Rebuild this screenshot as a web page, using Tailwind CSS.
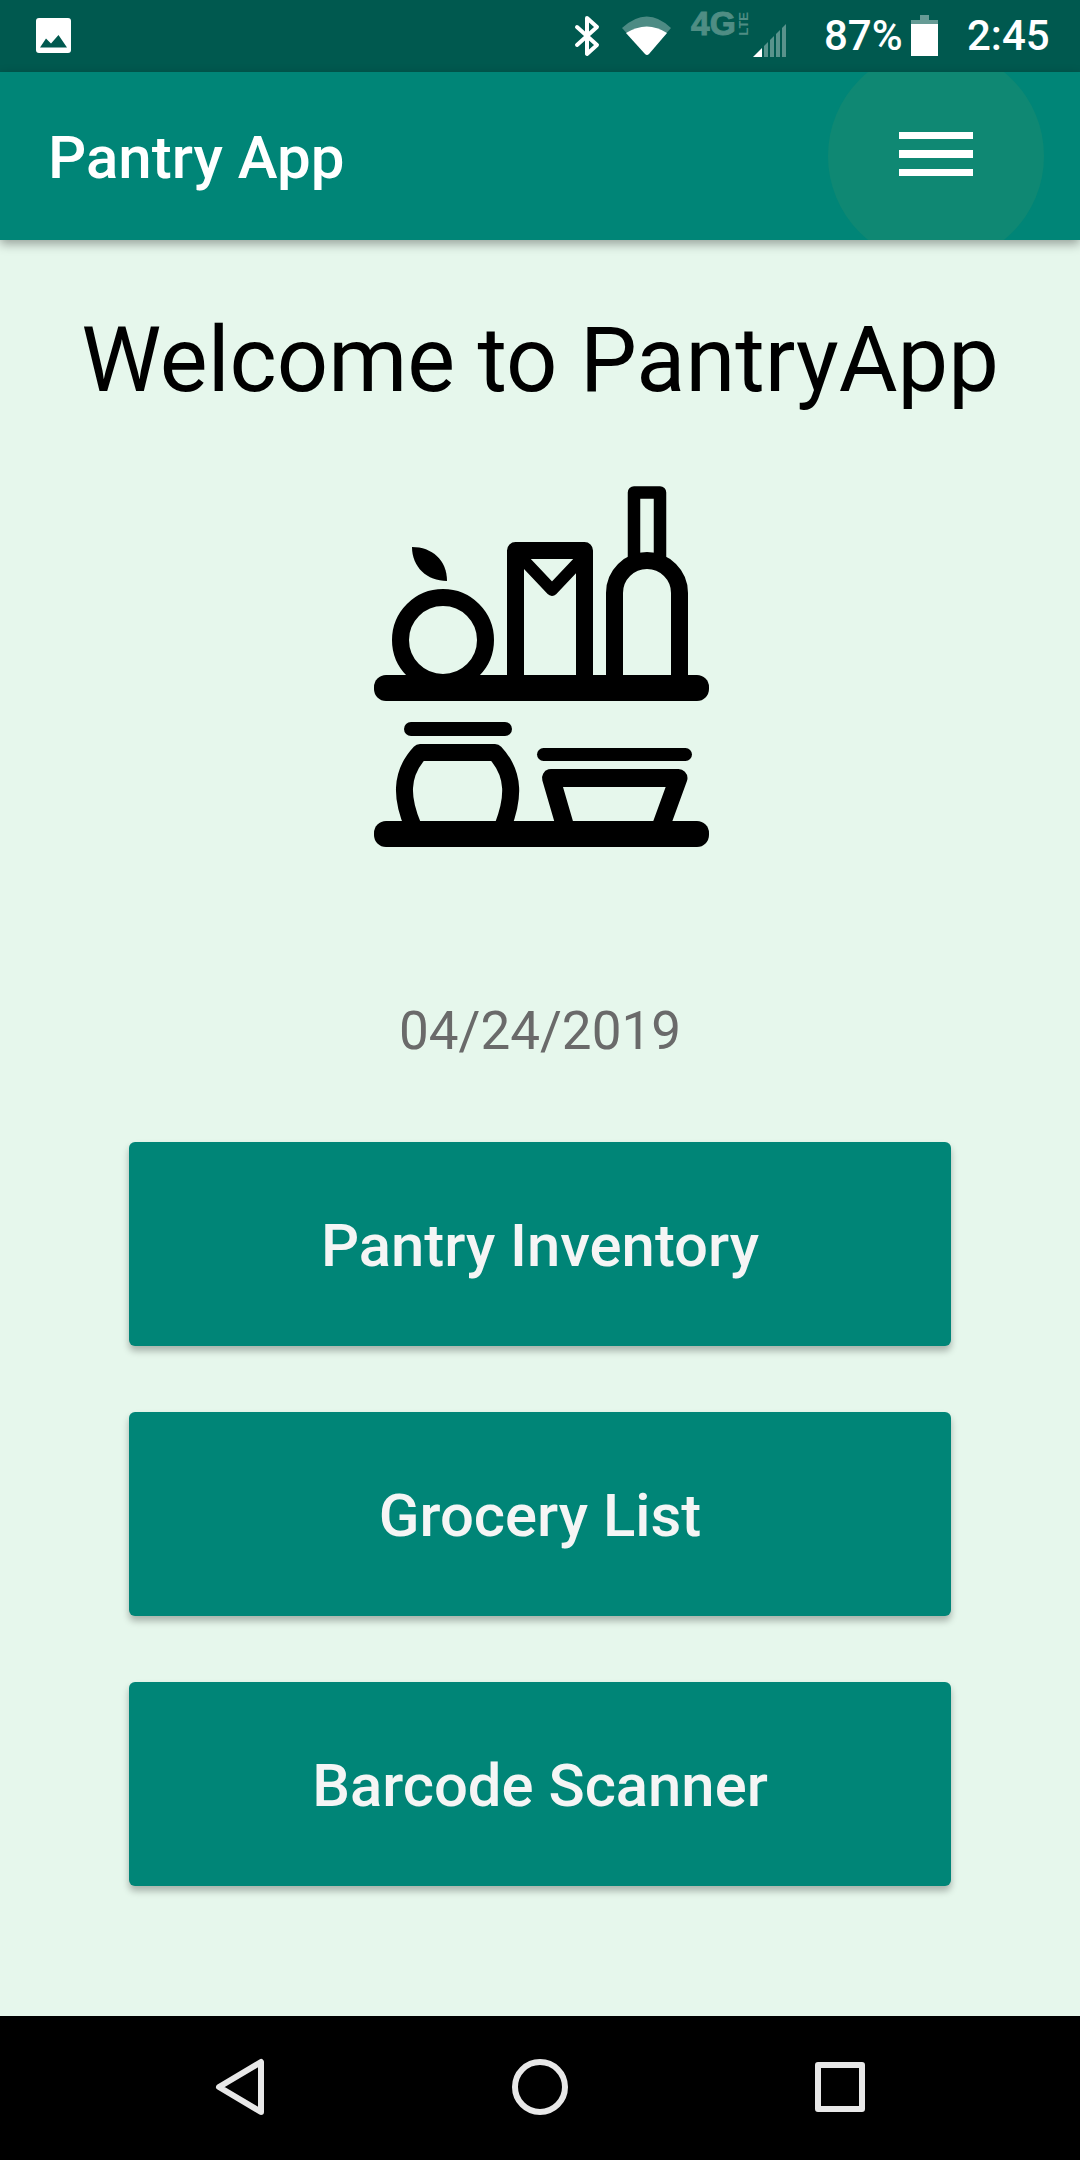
<!DOCTYPE html>
<html lang="en">
<head>
  <meta charset="UTF-8" />
  <title>Pantry App</title>
  <script src="https://cdn.jsdelivr.net/npm/@tailwindcss/browser@4"></script>
</head>
<body class="w-[1080px] h-[2160px] flex flex-col overflow-hidden bg-[#e6f7ec] font-['Roboto',sans-serif]">

  <!-- Status bar -->
  <div class="h-[72px] shrink-0 bg-[#00594f] relative flex items-center text-white">
    <svg class="ml-9 w-[35px] h-[35px] mb-[1px]" viewBox="36 18 35 35">
      <rect x="36" y="18" width="35" height="35" rx="3" fill="#fff"/>
      <path d="M40 47.5 L46 38.5 L51 43.5 L58.5 35 L67 47.5 Z" fill="#00594f"/>
    </svg>
    <div class="ml-auto flex items-center">
      <svg class="w-[30px] h-[44px]" viewBox="572 15 30 44" fill="none" stroke="#fff" stroke-width="4" stroke-linejoin="round" stroke-linecap="round">
        <path d="M577 28 L597 46 L587 55 V19 L597 28 L577 46"/>
      </svg>
      <svg class="ml-[20px] w-[50px] h-[42px]" viewBox="622 15 50 42">
        <path d="M622 28 Q647 5 671 28 L647 55 Z" fill="#fff" fill-opacity="0.3"/>
        <path d="M626 33 Q647 20 667 33 L649 54 Q647 56 645 54 Z" fill="#fff"/>
      </svg>
      <div class="ml-[19px] w-[62px] h-[44px] flex items-start text-[#4f8d84] self-start pt-[9px]">
        <span class="text-[33.5px] leading-[30px] font-bold [-webkit-text-stroke:1px_#4f8d84] font-['Liberation_Sans',sans-serif]">4G</span>
        <span class="text-[13px] leading-[12px] font-bold [writing-mode:vertical-rl] rotate-180 mt-[3px] ml-[2px] font-['Liberation_Sans',sans-serif]">LTE</span>
      </div>
      <svg class="w-[34px] h-[34px] mt-[9px]" viewBox="753 24 34 34" fill="#fff">
        <path d="M753 57 L762 48 V57 Z"/>
        <g fill-opacity="0.35">
          <path d="M764 46 L768 42 V57 H764 Z"/>
          <path d="M770 40 L774 36 V57 H770 Z"/>
          <path d="M776 34 L780 30 V57 H776 Z"/>
          <path d="M782 28 L786 24 V57 H782 Z"/>
        </g>
      </svg>
      <span class="ml-[37px] w-[80px] whitespace-nowrap text-[42px] leading-[72px] font-medium">87%</span>
      <svg class="ml-[7px] w-[27px] h-[42px] mt-[-1px]" viewBox="911 15 27 42" fill="#fff">
        <path d="M920 15 H929 V20 H938 V24 H911 V20 H920 Z" fill-opacity="0.4"/>
        <rect x="911" y="24" width="27" height="32"/>
      </svg>
      <span class="ml-[29px] mr-[31px] w-[82px] whitespace-nowrap text-[42px] leading-[72px] font-medium">2:45</span>
    </div>
  </div>

  <!-- App bar -->
  <header class="h-[168px] shrink-0 bg-[#008577] relative z-10 overflow-hidden flex items-center shadow-[0_4px_10px_rgba(0,0,0,0.35)]">
    <h1 class="ml-[48px] mt-[4px] text-[60px] leading-none font-medium text-white">Pantry App</h1>
    <div class="absolute left-[828px] top-[-24px] w-[216px] h-[216px] rounded-full bg-[#0f8873] flex flex-col items-center justify-center gap-[11px] pb-[4px]">
      <span class="w-[74px] h-[7.5px] bg-white"></span>
      <span class="w-[74px] h-[7.5px] bg-white"></span>
      <span class="w-[74px] h-[7.5px] bg-white"></span>
    </div>
  </header>

  <!-- Content -->
  <main class="flex-1 flex flex-col items-center">
    <h2 class="mt-[58px] text-[90.2px] leading-[124px] whitespace-nowrap text-black">Welcome to PantryApp</h2>

    <svg class="mt-[64px] ml-[3px] w-[335px] h-[361px]" viewBox="374 486 335 361" fill="none" stroke="#000" stroke-linejoin="round" stroke-linecap="butt">
      <!-- apple -->
      <path d="M412 547 C432 547 447 560 447 581 C427 581 412 567 412 547 Z" fill="#000" stroke="none"/>
      <circle cx="443" cy="640" r="42.5" stroke-width="17"/>
      <!-- carton -->
      <path d="M515.5 680 V550.5 H584.5 V680" stroke-width="17"/>
      <path d="M517 553 L552 590 L587 553" stroke-width="12"/>
      <!-- bottle -->
      <path d="M634 562 V492.5 H660 V562" stroke-width="12.5"/>
      <path d="M614.5 680 V593 A32.5 32.5 0 0 1 679.5 593 V680" stroke-width="17"/>
      <!-- jar -->
      <path d="M411 729 H505" stroke-width="14" stroke-linecap="round"/>
      <path d="M413 826 C402 800 399 775 420 752.5 H495 C516 775 513 800 503 826" stroke-width="17"/>
      <!-- bowl -->
      <path d="M543.5 754.5 H685.5" stroke-width="13" stroke-linecap="round"/>
      <path d="M565 826 L551 778 H678.5 L661 826" stroke-width="18"/>
      <!-- shelves -->
      <rect x="374" y="675" width="335" height="26" rx="12" fill="#000" stroke="none"/>
      <rect x="374" y="821" width="335" height="26" rx="12" fill="#000" stroke="none"/>
    </svg>

    <p class="mt-[152px] text-[53px] leading-[64px] text-[#6a6a6a]">04/24/2019</p>

    <div class="mt-[79px] flex flex-col gap-[66px]">
      <button class="w-[822px] h-[204px] pt-[6px] rounded-[6px] bg-[#008577] text-[#f5f5f5] text-[59.8px] font-medium shadow-[0_5px_7px_rgba(0,0,0,0.28)]">Pantry Inventory</button>
      <button class="w-[822px] h-[204px] pt-[6px] rounded-[6px] bg-[#008577] text-[#f5f5f5] text-[59.8px] font-medium shadow-[0_5px_7px_rgba(0,0,0,0.28)]">Grocery List</button>
      <button class="w-[822px] h-[204px] pt-[6px] rounded-[6px] bg-[#008577] text-[#f5f5f5] text-[59.8px] font-medium shadow-[0_5px_7px_rgba(0,0,0,0.28)]">Barcode Scanner</button>
    </div>
  </main>

  <!-- Navigation bar -->
  <nav class="h-[144px] shrink-0 bg-black grid grid-cols-3 px-[90px] pb-[2px] items-center justify-items-center">
    <svg class="w-[56px] h-[64px]" viewBox="212 2056 56 64" fill="none" stroke="#e8e8e8" stroke-width="6" stroke-linejoin="round">
      <path d="M261 2063 V2113 L219 2088 Z"/>
    </svg>
    <svg class="w-[56px] h-[56px]" viewBox="512 2060 56 56" fill="none" stroke="#e8e8e8" stroke-width="6">
      <circle cx="540" cy="2088" r="25"/>
    </svg>
    <svg class="w-[50px] h-[50px]" viewBox="815 2063 50 50" fill="none" stroke="#e8e8e8" stroke-width="6" stroke-linejoin="round">
      <rect x="818" y="2066" width="44" height="44"/>
    </svg>
  </nav>
</body>
</html>
